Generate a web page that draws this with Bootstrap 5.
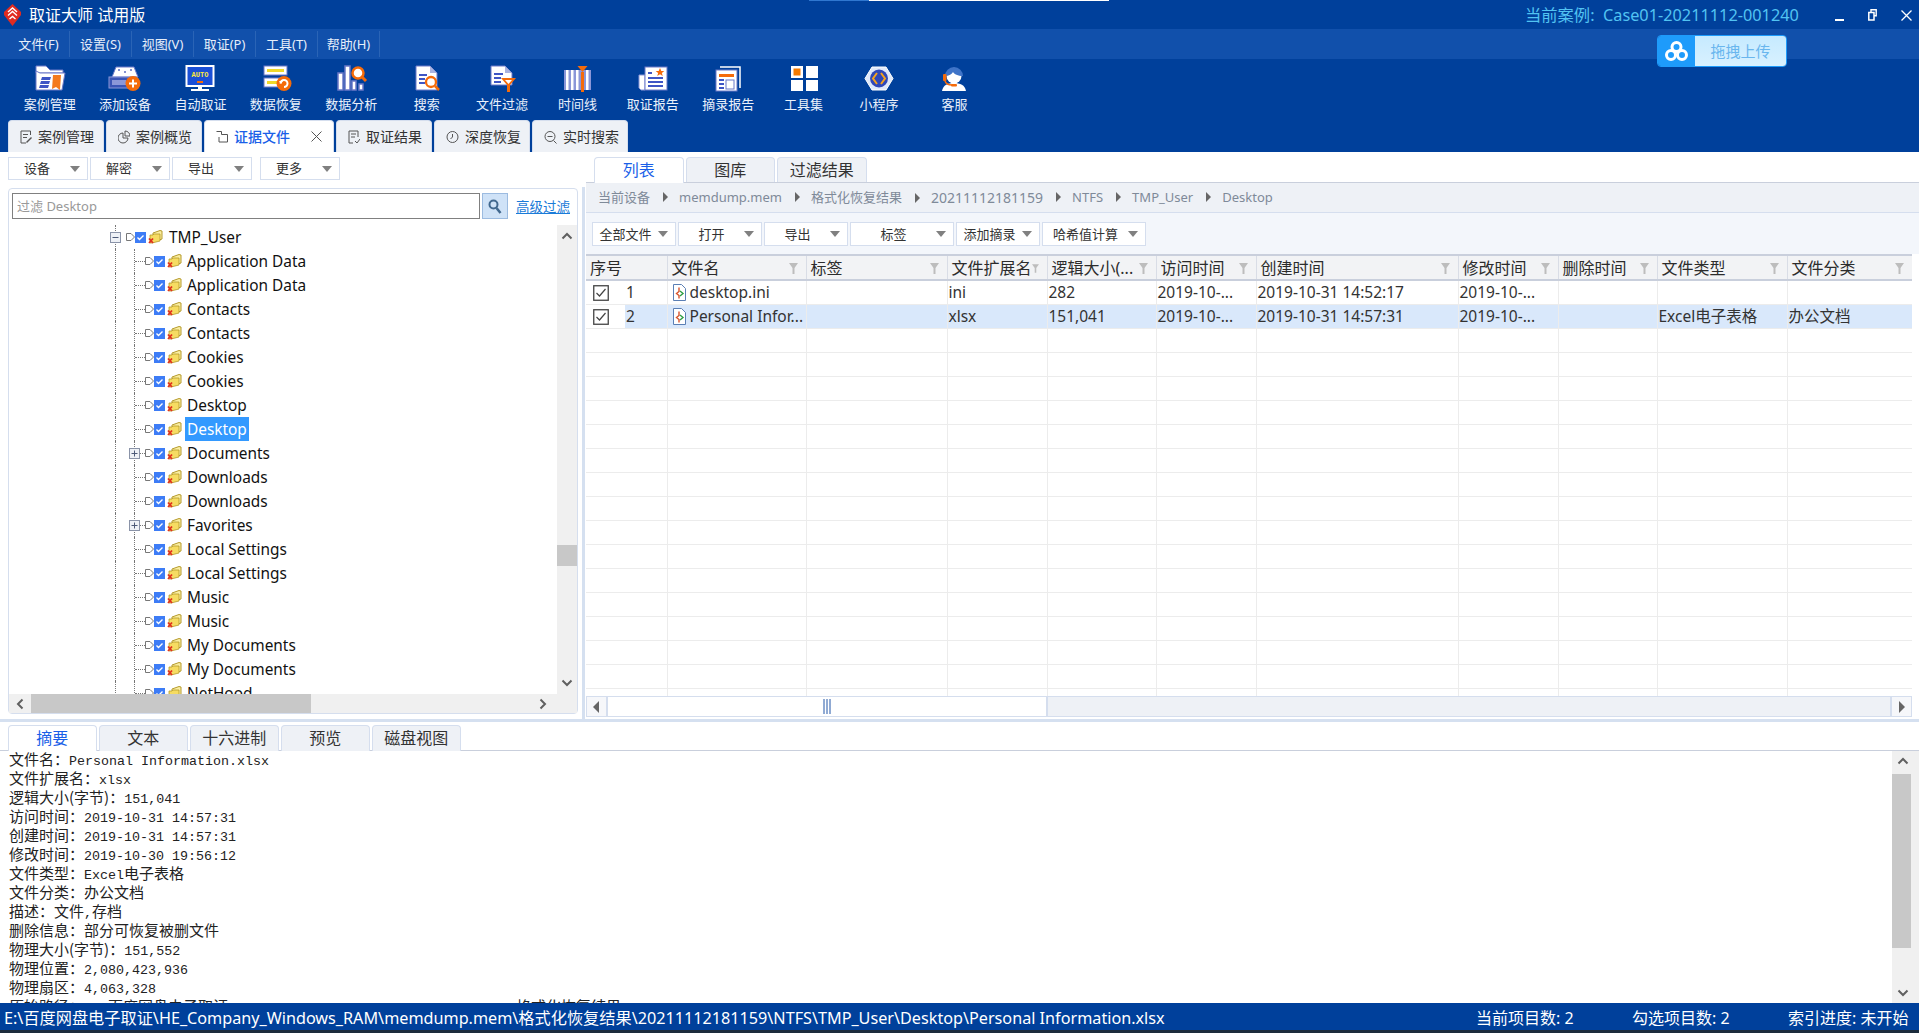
<!DOCTYPE html>
<html lang="zh-CN">
<head>
<meta charset="UTF-8">
<meta name="viewport" content="width=device-width, initial-scale=1">
<title>取证大师 试用版</title>
<link href="https://cdn.jsdelivr.net/npm/bootstrap@5.3.3/dist/css/bootstrap.min.css" rel="stylesheet">
<style>
  html, body { height: 100%; overflow: hidden; }
  body {
    width: 1919px; height: 1033px; background: #fff; color: #222; position: relative;
    font-family: "Noto Sans", "Noto Sans CJK SC", sans-serif; font-size: 13px;
  }
  .top-line { position: absolute; left: 809px; top: 0; width: 300px; height: 1px; background: linear-gradient(90deg, #2f77d0 60px, #fff 60px); }
  .title-bar { height: 29px; background: #00409b; color: #fff; padding-left: 4px; }
  .title-text { font-size: 16px; margin-left: 8px; }
  .case-name { color: #52c3f2; font-size: 16.3px; position: absolute; left: 1525px; top: 3px; }
  .win-btns { position: absolute; left: 1835px; top: 8px; gap: 24px; }
  .menu-bar { height: 30px; background: #1150ab; color: #e6eefa; }
  .menu-item { width: 62px; text-align: center; line-height: 26px; height: 26px; margin-top: 2px; border-right: 1px solid #2a64b6; }
  .menu-item:first-child { width: 70px; padding-left: 8px; }
  .upload-box { position: absolute; left: 1657px; top: 35px; width: 130px; height: 32px; border-radius: 4px; overflow: hidden; border: 1px solid #1e9bfb; }
  .upload-logo { width: 37px; background: #1e9bfb; }
  .upload-text { background: linear-gradient(#c6eaff, #d8f1ff); color: #69b6ee; font-size: 15px; }
  .tool-bar { height: 61px; background: #00409b; padding-left: 12px; }
  .tool-item { width: 75.4px; text-align: center; color: #eaf1fb; padding-top: 6px; }
  .tool-item svg { display: block; margin: 0 auto; height: 27px; width: 34px; }
  .tool-item span { display: block; line-height: 18px; margin-top: 3px; }
  .tabs-wrap { height: 32px; background: #00409b; padding-left: 8px; gap: 2px; border: 0; }
  .tabs-wrap .nav-link {
    width: 96px; height: 32px; margin: 0; padding: 0 0 0 11px; background: #eef1f6; color: #333; font-size: 14px;
    border: 1px solid #d5deee; border-bottom: 0; border-radius: 4px 4px 0 0; display: flex; align-items: center; gap: 6px;
  }
  .tabs-wrap .nav-link.active { width: 130px; background: #fff; color: #1a5fe8; font-weight: 500; }
  .tab-close { margin-left: 15px; }
  .work-area { height: 567px; }
  .left-pane { width: 582px; padding: 5px 0 5px 8px; flex: none; }
  .pane-split { width: 3px; background: #d5e0f0; margin-top: 35px; flex: none; }
  .right-pane { flex: 1; min-width: 0; padding-top: 5px; padding-left: 1px; }
  .drop-btn {
    height: 23px; width: 80px; padding: 0; border: 1px solid #d5deee; border-radius: 0; background: #fff; color: #333;
    font-size: 13px; line-height: 1; display: flex; align-items: center;
  }
  .drop-btn span { flex: 1; text-align: center; white-space: nowrap; }
  .drop-btn.dropdown-toggle::after { border-top: 6px solid #808080; border-left: 5px solid transparent; border-right: 5px solid transparent; border-bottom: 0; margin: 0 7px 0 0; }
  .left-tools { gap: 2px; height: 23px; }
  .left-tools .drop-btn:last-child { margin-left: 6px; }
  .left-tools .drop-btn span { padding-right: 5px; }
  .tree-box { border: 1px solid #d5deee; border-radius: 4px; width: 570px; height: 526px; margin-top: 8px; }
  .filter-row { padding: 4px 0 0 3px; height: 36px; }
  .filter-input { width: 468px; height: 26px; border: 1px solid #808080; border-radius: 0; padding: 0 4px; font-size: 13px; color: #999; }
  .filter-input::placeholder { color: #999; }
  .filter-btn { width: 26px; height: 26px; margin-left: 2px; padding: 0; border: 1px solid #9cbbe0; border-radius: 0; background: #cfe2f7; display: flex; align-items: center; justify-content: center; }
  .filter-link { margin-left: 8px; color: #1a7bd8; font-size: 13.5px; line-height: 28px; }
  .tree-view { height: 469px; }
  .tree-list { width: 548px; overflow: hidden; }
  .tree-row { height: 24px; position: relative; display: flex; align-items: center; padding-left: 126px; font-size: 15.4px; color: #111; white-space: nowrap; }
  .tree-row::before { content: ""; position: absolute; left: 106px; top: 0; bottom: 0; border-left: 1px dotted #777; }
  .tree-row::after { content: ""; position: absolute; left: 125px; top: 0; bottom: 0; border-left: 1px dotted #777; }
  .tree-row.root { padding-left: 117px; }
  .tree-row.root::after { display: none; }
  .tree-dash { width: 10px; border-top: 1px dotted #777; flex: none; }
  .tree-exp { position: absolute; z-index: 1; background: #fff; }
  .tree-row .tree-exp { left: 120px; top: 7px; }
  .tree-row.root .tree-exp { left: 101px; top: 7px; }
  .tree-flag { flex: none; }
  .tree-check { flex: none; }
  .tree-folder { margin-left: 2px; flex: none; }
  .tree-label { margin-left: 3px; padding: 0 2px; height: 24px; line-height: 26px; }
  .tree-row.root .tree-label { margin-left: 4px; }
  .tree-label.sel { background: #3399ff; color: #fff; }
  .vbar { width: 20px; background: #f0f0f0; flex: none; position: relative; padding-top: 7px; text-align: center; }
  .vbar svg { display: block; margin: 0 auto; }
  .vbar-thumb { background: #c8c8c8; margin-top: 305px; height: 21px; }
  .vbar-down { margin-top: 113px !important; }
  .hbar { height: 19px; background: #f0f0f0; padding: 0 7px; }
  .hbar-thumb { background: #c8c8c8; width: 280px; height: 19px; margin-left: 7px; }
  .hbar-right { margin-left: 228px; }
  .subtabs { height: 25px; padding-left: 8px; gap: 2px; border-bottom: 0; position: relative; z-index: 1; }
  .subtabs .nav-link {
    width: 89.5px; height: 25px; margin: 0; padding: 0; background: #eef1f6; color: #333; font-size: 16px; line-height: 24px;
    border: 1px solid #d5deee; border-bottom: 0; border-radius: 4px 4px 0 0; text-align: center;
  }
  .subtabs .nav-link.active { background: #fff; color: #1a5fe8; height: 26px; }
  .path-bar { height: 31px; margin: 0; padding: 0 0 0 12px; background: #eef1f6; color: #7f8a99; font-size: 13px; border-top: 1px solid #c9cfdc; border-bottom: 1px solid #d5deee; align-items: center; flex-wrap: nowrap; }
  .path-bar .breadcrumb-item { color: #7f8a99; white-space: nowrap; padding-left: 13px; }
  .path-bar .breadcrumb-item:first-child { padding-left: 0; }
  .path-bar .breadcrumb-item + .breadcrumb-item::before {
    content: ""; float: none; display: inline-block; padding: 0; margin-right: 11px;
    border-left: 5px solid #666; border-top: 5px solid transparent; border-bottom: 5px solid transparent;
  }
  .path-bar .path-num { font-size: 14px; }
  .file-tools { height: 41px; background: #f3f6fb; padding: 9px 0 0 6px; gap: 2px; }
  .file-tools .drop-btn { width: 84px; height: 24px; }
  .file-tools .wide { width: 104px; }
  .table-wrap { width: 1326px; height: 442px; overflow: hidden; }
  .file-grid { table-layout: fixed; width: 1326px; margin: 0; border-collapse: collapse; font-size: 15.5px; }
  .file-grid th, .file-grid td { padding: 0 1px; border: 0; border-right: 1px solid #ececec; border-bottom: 1px solid #ececec; height: 24px; line-height: 22px; white-space: nowrap; overflow: hidden; color: #333; font-weight: 400; box-shadow: none; background: transparent; }
  .file-grid th { height: 25px; background: #f2f3f5; font-size: 16px; border-top: 2px solid #c9cfdc; border-bottom: 2px solid #c9cfdc; border-right: 1px solid #d9dde6; padding-left: 4px; color: #2c2c2c; }
  .file-grid tr.picked td { background: #d9e8fb; }
  .file-grid tr td.num-cell { padding-left: 7px; }
  .file-grid tr.picked td.num-cell { background: linear-gradient(90deg, #fff 39px, #d9e8fb 39px); }
  .head-cell { display: flex; align-items: center; justify-content: space-between; padding-right: 7px; margin-top: -1px; }
  .row-check { vertical-align: -3px; margin-right: 17px; }
  .doc-ico { vertical-align: -3px; margin: 0 4px 0 4px; }
  .table-hbar { width: 1326px; height: 21px; background: #eef1f6; border: 1px solid #d5deee; }
  .hbar-btn { width: 21px; height: 100%; background: #f6f7fa; border-right: 2px solid #d5deee; }
  .hbar-btn.end { margin-left: auto; border-right: 0; border-left: 2px solid #d5deee; }
  .hbar-grip { width: 440px; height: 100%; background: #fff; border-right: 2px solid #d5deee; }
  .h-split { height: 3px; background: #d5e0f0; }
  .bottom-tabs { height: 29px; padding: 3px 0 0 8px; gap: 2.5px; border-bottom: 1px solid #c9cfdc; }
  .bottom-tabs .nav-link { width: 88.5px; height: 26px; }
  .bottom-body { height: 252px; }
  .summary { flex: 1; overflow: hidden; padding: 0 0 0 9px; font-family: "Liberation Mono", "Noto Sans CJK SC", monospace; font-size: 13.33px; line-height: 19px; color: #222; white-space: nowrap; }
  .summary div { height: 19px; }
  .summary b { font-family: "Noto Sans CJK SC", sans-serif; font-size: 15px; font-weight: 400; line-height: 1; }
  .text-vbar { width: 27px; padding-top: 6px; }
  .text-vbar svg { margin-left: 5px; }
  .text-vbar .vbar-thumb { width: 19px; margin-top: 9px; height: 174px; }
  .text-vbar .vbar-down { margin-top: 41px !important; }
  .status-bar { height: 27px; background: #00409b; color: #fff; font-size: 16.2px; padding: 3px 0 0 4px; }
  .status-bar .stat-a { margin-left: auto; width: 156px; font-size: 16px; }
  .status-bar .stat-b { width: 156px; font-size: 16px; }
  .status-bar .stat-c { width: 131px; white-space: nowrap; font-size: 16px; }
  .end-strip { height: 3px; background: #1c2c3c; }
</style>
</head>
<body>
<svg width="0" height="0" class="position-absolute">
  <defs>
    <symbol id="s-flag" viewBox="0 0 9 10"><path d="M.5 1.5h4.5l3.5 3.5-3.5 3.5H.5z" fill="#fff" stroke="#777"/></symbol>
    <symbol id="s-chk" viewBox="0 0 11 11"><rect width="11" height="11" fill="#3d7cf6"/><path d="M2.500 5.500l2 2 4-4" fill="none" stroke="#fff" stroke-width="1.400"/></symbol>
    <symbol id="s-fold" viewBox="0 0 15 14"><path d="M5 3l7-2.500 2 .5v8l-9 3z" fill="#fbeea0" stroke="#b59a2c"/><path d="M2 5h3l1-1h6v7l-8 2H2z" fill="#f6dc62" stroke="#b59a2c" stroke-width=".8"/><path d="M1 8.500l4 4.500M5 8.500l-4 4.500" stroke="#e0301e" stroke-width="1.800"/></symbol>
    <symbol id="s-funnel" viewBox="0 0 9 11"><path d="M0 0h9L5.500 5v6h-2V5z" fill="#bdbdbd"/></symbol>
    <symbol id="s-box" viewBox="0 0 16 16"><rect x=".75" y=".75" width="14.500" height="14.500" fill="#fff" stroke="#444" stroke-width="1.300"/><path d="M3.500 8l3 3 6-7" fill="none" stroke="#444" stroke-width="1.200"/></symbol>
    <symbol id="s-doc" viewBox="0 0 13 17"><path d="M.5.500h8l4 4v12H.5z" fill="#fff" stroke="#5a7fb5"/><path d="M6 3.500v4l-2.500 2 2.500 2v3" fill="none" stroke="#d8532b" stroke-width="1.400"/><path d="M7 7l3 2.500L7 12" fill="none" stroke="#2f9e44" stroke-width="1.400"/></symbol>
    <symbol id="s-up" viewBox="0 0 12 8"><path d="M1.500 6.500L6 2l4.500 4.500" fill="none" stroke="#606060" stroke-width="2"/></symbol>
    <symbol id="s-down" viewBox="0 0 12 8"><path d="M1.500 1.500L6 6l4.500-4.500" fill="none" stroke="#606060" stroke-width="2"/></symbol>
    <symbol id="s-left" viewBox="0 0 8 12"><path d="M6.500 1.500L2 6l4.500 4.500" fill="none" stroke="#606060" stroke-width="2"/></symbol>
    <symbol id="s-right" viewBox="0 0 8 12"><path d="M1.500 1.500L6 6l-4.500 4.500" fill="none" stroke="#606060" stroke-width="2"/></symbol>
  </defs>
</svg>

<div class="top-line"></div>

<div class="title-bar d-flex align-items-center">
  <svg width="17" height="22" viewBox="0 0 17 22"><path d="M8.500 0L17 8v3l-8.500 11L0 11V8z" fill="#e02b20"/><path d="M4 8l4.500-4L13 8M4 11.500l4.500-4 4.500 4M5.500 15l3-2.500 3 2.500" fill="none" stroke="#fff" stroke-width="1.400"/></svg>
  <span class="title-text">取证大师 试用版</span>
  <span class="case-name">当前案例:&nbsp; Case01-20211112-001240</span>
  <div class="win-btns d-flex align-items-center">
    <svg width="9" height="14" viewBox="0 0 9 14"><rect y="11" width="9" height="2" fill="#fff"/></svg>
    <svg width="9" height="12" viewBox="0 0 9 12"><path d="M3 3V.8h5.200v6H6" fill="none" stroke="#fff" stroke-width="1.400"/><rect x=".8" y="3.500" width="5.200" height="7.500" fill="none" stroke="#fff" stroke-width="1.500"/></svg>
    <svg width="11" height="11" viewBox="0 0 11 11"><path d="M.5.500l10 10M10.500.500l-10 10" stroke="#fff" stroke-width="1.300"/></svg>
  </div>
</div>

<nav class="menu-bar d-flex">
  <div class="menu-item">文件(F)</div>
  <div class="menu-item">设置(S)</div>
  <div class="menu-item">视图(V)</div>
  <div class="menu-item">取证(P)</div>
  <div class="menu-item">工具(T)</div>
  <div class="menu-item">帮助(H)</div>
</nav>

<div class="upload-box d-flex">
  <div class="upload-logo d-flex align-items-center justify-content-center">
    <svg width="25" height="22" viewBox="0 0 25 22"><g fill="none" stroke="#fff" stroke-width="3"><circle cx="12.500" cy="7" r="4.500"/><circle cx="7" cy="15" r="4.500"/><circle cx="18" cy="15" r="4.500"/></g></svg>
  </div>
  <div class="upload-text flex-grow-1 d-flex align-items-center justify-content-center">拖拽上传</div>
</div>

<div class="tool-bar d-flex">
  <div class="tool-item">
    <svg viewBox="0 0 34 27"><path d="M3 1h10l4 4h13v3H3z" fill="#fff" stroke="#6a78c8"/><path d="M3 6v19h26l3-17H7z" fill="#fff" stroke="#6a78c8"/><path d="M9 12h9l-1 3H8zM8 16h9l-1 3H7zM7 20h9l-1 3H6z" fill="#3e55c5"/><path d="M20 10h8l-1 15-4-3-4 2z" fill="#f47a1d"/></svg>
    <span>案例管理</span>
  </div>
  <div class="tool-item">
    <svg viewBox="0 0 34 27"><path d="M4 12L8 2h18l4 10z" fill="#fff" stroke="#6a78c8"/><circle cx="11" cy="5" r="1" fill="#5b6cc0"/><circle cx="23" cy="5" r="1" fill="#5b6cc0"/><circle cx="17" cy="7" r="1" fill="#5b6cc0"/><rect x="1" y="12" width="28" height="11" fill="#3b55b5" stroke="#8b97d8"/><rect x="4" y="15" width="14" height="5" fill="#8b97d8"/><circle cx="25" cy="18.500" r="7.500" fill="#f56b0a"/><path d="M25 14.500v8M21 18.500h8" stroke="#fff" stroke-width="2"/></svg>
    <span>添加设备</span>
  </div>
  <div class="tool-item">
    <svg viewBox="0 0 34 27"><rect x="3.500" y="1" width="27" height="20" fill="#1a4fd6" stroke="#fff" stroke-width="2"/><text x="17" y="12" text-anchor="middle" font-size="7" font-family="Liberation Mono" font-weight="700" fill="#ffe93b">AUTO</text><rect x="14" y="16" width="6" height="2" fill="#f56b0a"/><path d="M15 22h4v2h-4z" fill="#fff"/><rect x="8" y="24" width="18" height="2" fill="#fff"/></svg>
    <span>自动取证</span>
  </div>
  <div class="tool-item">
    <svg viewBox="0 0 34 27"><rect x="5" y="1" width="23" height="9" fill="#fff" stroke="#6a78c8"/><rect x="8" y="4" width="17" height="3" fill="#f0d92a"/><rect x="5" y="13" width="23" height="9" fill="#fff" stroke="#6a78c8"/><rect x="8" y="16" width="10" height="3" fill="#f0d92a"/><circle cx="25" cy="18.500" r="7.500" fill="#f56b0a"/><path d="M21.500 18.500a3.500 3.500 0 1 1 3.500 3.500" fill="none" stroke="#fff" stroke-width="2"/><path d="M20 16h4l-2 3z" fill="#fff"/></svg>
    <span>数据恢复</span>
  </div>
  <div class="tool-item">
    <svg viewBox="0 0 34 27"><rect x="4" y="8" width="5" height="17" fill="#fff" stroke="#6a78c8" stroke-width="1.500"/><rect x="11" y="1" width="5" height="24" fill="#fff" stroke="#6a78c8" stroke-width="1.500"/><rect x="18" y="16" width="4" height="9" fill="#fff" stroke="#6a78c8" stroke-width="1.500"/><rect x="25" y="19" width="4" height="6" fill="#fff" stroke="#6a78c8" stroke-width="1.500"/><circle cx="24" cy="8" r="5.500" fill="#fff" stroke="#f56b0a" stroke-width="2.500"/><path d="M28 12l4 4" stroke="#f56b0a" stroke-width="3"/></svg>
    <span>数据分析</span>
  </div>
  <div class="tool-item">
    <svg viewBox="0 0 34 27"><path d="M6 1h14l7 7v17H6z" fill="#fff" stroke="#6a78c8"/><path d="M20 1l7 7h-7z" fill="#aab3e0"/><path d="M9 10h8M9 14h6M9 18h6" stroke="#3e55c5" stroke-width="2"/><circle cx="21" cy="17" r="5" fill="#fff" stroke="#f56b0a" stroke-width="2.300"/><path d="M25 21l4 4" stroke="#f56b0a" stroke-width="2.500"/></svg>
    <span>搜索</span>
  </div>
  <div class="tool-item">
    <svg viewBox="0 0 34 27"><path d="M6 1h14l7 7v12H6z" fill="#fff" stroke="#6a78c8"/><path d="M20 1l7 7h-7z" fill="#aab3e0"/><path d="M9 9h9M9 13h7M9 17h7" stroke="#3e55c5" stroke-width="2"/><path d="M16 13h15l-6 7v7h-3v-7z" fill="#f56b0a"/><path d="M20 15h7l-3.500 4z" fill="#fff"/></svg>
    <span>文件过滤</span>
  </div>
  <div class="tool-item">
    <svg viewBox="0 0 34 27"><path d="M4 5h27v20H4z" fill="#8b97d8"/><path d="M6 5h2.500v20H6zM11 5h2.500v20H11zM16 5h2.500v20H16zM26 5h2.500v20H26z" fill="#fff"/><rect x="21" y="7" width="3" height="20" fill="#f56b0a"/><path d="M17.500 1h10l-5 6z" fill="#f56b0a"/></svg>
    <span>时间线</span>
  </div>
  <div class="tool-item">
    <svg viewBox="0 0 34 27"><path d="M3 10h6v15H5l-2-2z" fill="#fff" stroke="#8b97d8"/><rect x="9" y="2" width="22" height="23" fill="#fff" stroke="#6a78c8"/><path d="M24 3l1.300 3h3l-2.400 2 .8 3-2.700-1.800-2.700 1.800.8-3-2.400-2h3z" fill="#f56b0a"/><path d="M12 8h4M12 13h15M12 17h15M12 21h15" stroke="#3e55c5" stroke-width="2"/></svg>
    <span>取证报告</span>
  </div>
  <div class="tool-item">
    <svg viewBox="0 0 34 27"><path d="M9 2h20v21" fill="none" stroke="#fff" stroke-width="1.500"/><rect x="5" y="5" width="21" height="21" fill="#fff" stroke="#6a78c8"/><rect x="8" y="9" width="15" height="3" fill="#f56b0a"/><path d="M8 15h5M8 19h5M8 23h5" stroke="#3e55c5" stroke-width="2"/><rect x="15" y="15" width="8" height="9" fill="#fff" stroke="#6a78c8"/></svg>
    <span>摘录报告</span>
  </div>
  <div class="tool-item">
    <svg viewBox="0 0 34 27"><rect x="4" y="1" width="12" height="12" fill="#fff"/><rect x="6.500" y="3.500" width="7" height="7" fill="#f57a00"/><rect x="19" y="1" width="12" height="12" fill="#fff"/><rect x="4" y="15" width="12" height="11" fill="#fff"/><rect x="19" y="15" width="12" height="11" fill="#fff"/></svg>
    <span>工具集</span>
  </div>
  <div class="tool-item">
    <svg viewBox="0 0 34 27"><path d="M10 2h14l7 11.500L24 25H10L3 13.500z" fill="#dfe9fb" stroke="#fff"/><circle cx="17" cy="13.500" r="9" fill="#2f48b8"/><path d="M15 8l-4 5.500 4 5.500M19 8l4 5.500-4 5.500" fill="none" stroke="#f5a21c" stroke-width="2"/></svg>
    <span>小程序</span>
  </div>
  <div class="tool-item">
    <svg viewBox="0 0 34 27"><path d="M5 26c1-6 6-8 12-8s11 2 12 8z" fill="#fff"/><circle cx="17" cy="11" r="7.500" fill="#fff"/><path d="M8 11a9 9 0 0 1 18 0c-5 0-9-2-10-4-1 2-4 4-8 4z" fill="#3f74c8"/><rect x="6" y="9" width="3.500" height="7" rx="1" fill="#f56b0a"/><path d="M8 16c1 3 4 4 7 4" fill="none" stroke="#f56b0a" stroke-width="1.500"/><rect x="14" y="19" width="6" height="2.500" rx="1" fill="#f56b0a"/></svg>
    <span>客服</span>
  </div>
</div>

<ul class="nav tabs-wrap">
  <li><a class="nav-link"><svg width="12" height="14" viewBox="0 0 12 14"><path d="M10.500 5V1H1v12h5M3 4.500h5M3 7.500h4" fill="none" stroke="#555"/><path d="M6.500 12.500l5-5" stroke="#555" stroke-width="1.500"/></svg>案例管理</a></li>
  <li><a class="nav-link"><svg width="12" height="14" viewBox="0 0 12 14"><path d="M5 3a5 5 0 1 0 5 5H5z" fill="none" stroke="#555"/><path d="M7 1v5h5a5 5 0 0 0-5-5z" fill="none" stroke="#555"/></svg>案例概览</a></li>
  <li><a class="nav-link active"><svg width="12" height="14" viewBox="0 0 12 14"><path d="M.5 1.500h5v3h6V12H3V7" fill="none" stroke="#555"/></svg>证据文件<svg class="tab-close" width="11" height="11" viewBox="0 0 11 11"><path d="M.5.500l10 10M10.500.500l-10 10" stroke="#555"/></svg></a></li>
  <li><a class="nav-link"><svg width="12" height="14" viewBox="0 0 12 14"><path d="M5 13H1V1h9v6M3 4h5M3 7h4" fill="none" stroke="#555"/><path d="M7 11l2 2 3-4" fill="none" stroke="#555"/></svg>取证结果</a></li>
  <li><a class="nav-link"><svg width="13" height="14" viewBox="0 0 13 14"><circle cx="6.500" cy="7" r="5.500" fill="none" stroke="#555"/><path d="M6.500 4v3l-2 2" fill="none" stroke="#555"/></svg>深度恢复</a></li>
  <li><a class="nav-link"><svg width="13" height="14" viewBox="0 0 13 14"><circle cx="6" cy="6.500" r="5" fill="none" stroke="#555"/><path d="M3.500 6.500h5M9.500 10.500l3 3" stroke="#555"/></svg>实时搜索</a></li>
</ul>

<div class="work-area d-flex">
  <section class="left-pane">
    <div class="left-tools d-flex">
      <button class="btn drop-btn dropdown-toggle"><span>设备</span></button>
      <button class="btn drop-btn dropdown-toggle"><span>解密</span></button>
      <button class="btn drop-btn dropdown-toggle"><span>导出</span></button>
      <button class="btn drop-btn dropdown-toggle"><span>更多</span></button>
    </div>
    <div class="tree-box">
      <div class="filter-row d-flex">
        <input class="form-control filter-input" placeholder="过滤 Desktop">
        <button class="btn filter-btn"><svg width="14" height="15" viewBox="0 0 14 15"><circle cx="5.500" cy="5.500" r="4" fill="none" stroke="#41688f" stroke-width="2"/><path d="M8.500 9l4 5" stroke="#41688f" stroke-width="2.500"/></svg></button>
        <a class="filter-link" href="#">高级过滤</a>
      </div>
      <div class="tree-view d-flex">
        <div class="tree-list" id="tree"></div>
        <div class="vbar">
          <svg width="12" height="8"><use href="#s-up"/></svg>
          <div class="vbar-thumb"></div>
          <svg class="vbar-down" width="12" height="8"><use href="#s-down"/></svg>
        </div>
      </div>
      <div class="hbar d-flex align-items-center">
        <svg width="8" height="12"><use href="#s-left"/></svg>
        <div class="hbar-thumb"></div>
        <svg class="hbar-right" width="8" height="12"><use href="#s-right"/></svg>
      </div>
    </div>
  </section>
  <div class="pane-split"></div>
  <section class="right-pane">
    <ul class="nav subtabs">
      <li><a class="nav-link active">列表</a></li>
      <li><a class="nav-link">图库</a></li>
      <li><a class="nav-link">过滤结果</a></li>
    </ul>
    <ol class="breadcrumb path-bar">
      <li class="breadcrumb-item">当前设备</li>
      <li class="breadcrumb-item">memdump.mem</li>
      <li class="breadcrumb-item">格式化恢复结果</li>
      <li class="breadcrumb-item"><span class="path-num">20211112181159</span></li>
      <li class="breadcrumb-item">NTFS</li>
      <li class="breadcrumb-item">TMP_User</li>
      <li class="breadcrumb-item">Desktop</li>
    </ol>
    <div class="file-tools d-flex">
      <button class="btn drop-btn dropdown-toggle"><span>全部文件</span></button>
      <button class="btn drop-btn dropdown-toggle"><span>打开</span></button>
      <button class="btn drop-btn dropdown-toggle"><span>导出</span></button>
      <button class="btn drop-btn dropdown-toggle wide"><span>标签</span></button>
      <button class="btn drop-btn dropdown-toggle"><span>添加摘录</span></button>
      <button class="btn drop-btn dropdown-toggle wide"><span>哈希值计算</span></button>
    </div>
    <div class="table-wrap">
      <table class="table file-grid">
        <colgroup id="cols"></colgroup>
        <thead><tr id="head"></tr></thead>
        <tbody id="rows"></tbody>
      </table>
    </div>
    <div class="table-hbar d-flex">
      <div class="hbar-btn d-flex align-items-center justify-content-center"><svg width="7" height="12" viewBox="0 0 7 12"><path d="M6 0v12L0 6z" fill="#666"/></svg></div>
      <div class="hbar-grip d-flex align-items-center justify-content-center"><svg width="8" height="15" viewBox="0 0 8 15"><path d="M1 0v15M4 0v15M7 0v15" stroke="#2257a8"/></svg></div>
      <div class="hbar-btn end d-flex align-items-center justify-content-center"><svg width="7" height="12" viewBox="0 0 7 12"><path d="M1 0v12l6-6z" fill="#666"/></svg></div>
    </div>
  </section>
</div>

<div class="h-split"></div>

<ul class="nav subtabs bottom-tabs">
  <li><a class="nav-link active">摘要</a></li>
  <li><a class="nav-link">文本</a></li>
  <li><a class="nav-link">十六进制</a></li>
  <li><a class="nav-link">预览</a></li>
  <li><a class="nav-link">磁盘视图</a></li>
</ul>
<div class="bottom-body d-flex">
  <div class="summary">
    <div><b>文件名：</b>Personal Information.xlsx</div>
    <div><b>文件扩展名：</b>xlsx</div>
    <div><b>逻辑大小(字节)：</b>151,041</div>
    <div><b>访问时间：</b>2019-10-31 14:57:31</div>
    <div><b>创建时间：</b>2019-10-31 14:57:31</div>
    <div><b>修改时间：</b>2019-10-30 19:56:12</div>
    <div><b>文件类型：</b>Excel<b>电子表格</b></div>
    <div><b>文件分类：办公文档</b></div>
    <div><b>描述：文件</b>,<b>存档</b></div>
    <div><b>删除信息：部分可恢复被删文件</b></div>
    <div><b>物理大小(字节)：</b>151,552</div>
    <div><b>物理位置：</b>2,080,423,936</div>
    <div><b>物理扇区：</b>4,063,328</div>
    <div><b>原始路径：</b>E:\<b>百度网盘电子取证</b>\HE_Company_Windows_RAM\memdump.mem\<b>格式化恢复结果</b>\20211112181159\NTFS\TMP_User\Desktop\Personal Information.xlsx</div>
  </div>
  <div class="vbar text-vbar">
    <svg class="d-block" width="12" height="8"><use href="#s-up"/></svg>
    <div class="vbar-thumb"></div>
    <svg class="d-block vbar-down" width="12" height="8"><use href="#s-down"/></svg>
  </div>
</div>

<footer class="status-bar d-flex align-items-center">
  <span>E:\百度网盘电子取证\HE_Company_Windows_RAM\memdump.mem\格式化恢复结果\20211112181159\NTFS\TMP_User\Desktop\Personal Information.xlsx</span>
  <span class="stat-a">当前项目数: 2</span>
  <span class="stat-b">勾选项目数: 2</span>
  <span class="stat-c">索引进度: 未开始</span>
</footer>
<div class="end-strip"></div>

<script>
  // tree rows
  const names = ['Application Data', 'Application Data', 'Contacts', 'Contacts', 'Cookies', 'Cookies', 'Desktop', 'Desktop',
    'Documents', 'Downloads', 'Downloads', 'Favorites', 'Local Settings', 'Local Settings', 'Music', 'Music',
    'My Documents', 'My Documents', 'NetHood'];
  const expander = (minus) => `<svg class="tree-exp" width="11" height="11" viewBox="0 0 11 11"><rect x=".5" y=".5" width="10" height="10" fill="#eef1f6" stroke="#8a93a8"/><path d="M2.500 5.500h6${minus ? '' : 'M5.500 2.500v6'}" stroke="#4d5a78"/></svg>`;
  const nodeIcons = `<svg class="tree-flag" width="9" height="10"><use href="#s-flag"/></svg><svg class="tree-check" width="11" height="11"><use href="#s-chk"/></svg><svg class="tree-folder" width="15" height="14"><use href="#s-fold"/></svg>`;

  let treeHtml = `<div class="tree-row root">${expander(true)}${nodeIcons}<span class="tree-label">TMP_User</span></div>`;
  names.forEach((name, i) => {
    const plus = name === 'Documents' || name === 'Favorites';
    treeHtml += `<div class="tree-row">${plus ? expander(false) : ''}<span class="tree-dash"></span>${nodeIcons}<span class="tree-label${i === 7 ? ' sel' : ''}">${name}</span></div>`;
  });
  document.getElementById('tree').innerHTML = treeHtml;

  // file table
  const widths = [81, 139, 141, 100, 109, 100, 202, 100, 99, 130, 125];
  const heads = ['序号', '文件名', '标签', '文件扩展名', '逻辑大小(...', '访问时间', '创建时间', '修改时间', '删除时间', '文件类型', '文件分类'];
  document.getElementById('cols').innerHTML = widths.map(w => `<col width="${w}">`).join('');
  document.getElementById('head').innerHTML = heads.map((h, i) =>
    `<th><div class="head-cell">${h}${i ? '<svg width="9" height="11"><use href="#s-funnel"/></svg>' : ''}</div></th>`).join('');

  const data = [
    ['1', 'desktop.ini', '', 'ini', '282', '2019-10-...', '2019-10-31 14:52:17', '2019-10-...', '', '', ''],
    ['2', 'Personal Infor...', '', 'xlsx', '151,041', '2019-10-...', '2019-10-31 14:57:31', '2019-10-...', '', 'Excel电子表格', '办公文档']
  ];
  let rowsHtml = '';
  data.forEach((r, idx) => {
    rowsHtml += `<tr class="${idx === 1 ? 'picked' : ''}"><td class="num-cell"><svg class="row-check" width="16" height="16"><use href="#s-box"/></svg>${r[0]}</td>`;
    rowsHtml += `<td><svg class="doc-ico" width="13" height="17"><use href="#s-doc"/></svg>${r[1]}</td>`;
    rowsHtml += r.slice(2).map(v => `<td>${v}</td>`).join('') + '</tr>';
  });
  for (let i = 0; i < 16; i++) {
    rowsHtml += '<tr>' + widths.map(() => '<td></td>').join('') + '</tr>';
  }
  document.getElementById('rows').innerHTML = rowsHtml;
</script>
<script src="https://cdn.jsdelivr.net/npm/bootstrap@5.3.3/dist/js/bootstrap.bundle.min.js"></script>
</body>
</html>
